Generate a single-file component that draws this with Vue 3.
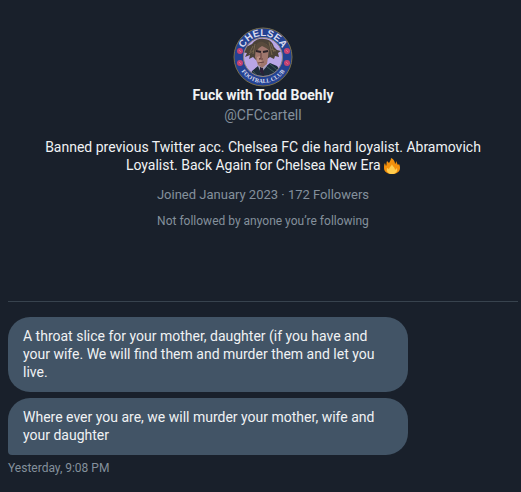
<script setup>
const profile = {
  name: 'Fuck with Todd Boehly',
  handle: '@CFCcartell',
  joined: 'Joined January 2023',
  followers: '172 Followers',
  note: 'Not followed by anyone you’re following',
};

const messages = [
  'A throat slice for your mother, daughter (if you have and your wife. We will find them and murder them and let you live.',
  'Where ever you are, we will murder your mother, wife and your daughter',
];
</script>

<template>
  <main class="conversation">
    <header class="profile">
      <svg class="profile__avatar" viewBox="0 0 60 60" aria-hidden="true">
        <defs>
          <path id="badge-top" d="M9 30a21 21 0 0 1 42 0" />
          <path id="badge-bottom" d="M4 30a26 26 0 0 0 52 0" />
          <clipPath id="badge-face"><circle cx="30" cy="30" r="19" /></clipPath>
        </defs>
        <circle cx="30" cy="30" r="29" fill="#244292" stroke="#796f4c" />
        <circle cx="30" cy="30" r="19.500" fill="#b9a6e6" stroke="#8d8478" />
        <g clip-path="url(#badge-face)">
          <path d="M16 52l3-8 6-5 5 3 7-6 7 3 5 7v8z" fill="#1e2c3a" />
          <path d="M24 37l4 9 6-7z" fill="#a9a2bd" />
          <path d="M27 40l3 1 1 8-4-4z" fill="#2b2038" />
          <path d="M19 17c3-4 7-6 12-5 6 0 9 4 10 8l3 3 4 1-3 2 1 4-4-1-1 3-4-2-3 2-8-1-3 2-3-3-4 2 1-4-5 2 2-4-6-1 4-2-2-3 5-1z" fill="#4b4238" />
          <path d="M20 19l-3 6M22 17l-2 10M38 17l3 8M36 15l3 13M16 27l5-4M43 24l-5-2" fill="none" stroke="#77674f" />
          <path d="M23 20l4-4 6 1 3 4-1 9-1 7-5 4-4-3-3-8z" fill="#9f766d" />
          <path d="M24 30l3-1 2 6-2 3-3-4z" fill="#bb8f83" />
          <path d="M22 22c1-6 4-8 8-7l6 4 1 5-4-3-4-2-3 2-3 4z" fill="#584a3c" />
          <path d="M23 24l5 1M30 25l5-1" stroke="#2b2228" stroke-width="2" />
          <path d="M28 26v5l-2 1h4M25 36l6-1" fill="none" stroke="#64403f" />
          <path d="M34 40l7 5M37 37l7 6M20 44l5 6" stroke="#3d5b58" />
        </g>
        <g fill="#c44372">
          <circle cx="7" cy="24" r="3" />
          <circle cx="7" cy="36" r="3" />
          <circle cx="54" cy="24" r="3" />
          <circle cx="54" cy="36" r="3" />
        </g>
        <g fill="none" stroke="#e0688a">
          <path d="M6 23l2 2M6 35l2 2M53 23l2 2M53 35l2 2" />
        </g>
        <text class="badge-title"><textPath href="#badge-top" startOffset="50%">CHELSEA</textPath></text>
        <text class="badge-subtitle"><textPath href="#badge-bottom" startOffset="50%">FOOTBALL CLUB</textPath></text>
      </svg>
      <h1 class="profile__name">{{ profile.name }}</h1>
      <p class="profile__handle">{{ profile.handle }}</p>
      <p class="profile__bio">
        Banned previous Twitter acc. Chelsea FC die hard loyalist. Abramovich Loyalist. Back Again for Chelsea New Era
        <svg class="fire" viewBox="0 0 16 16" role="img" aria-label="fire">
          <path d="M7 0c3 1 4 4 4 6 1-1 1-2 1-3 1 1 1 3 2 4l1-1c1 2 1 3 1 4 0 4-4 6-8 6s-8-2-8-6c0-2 0-4 1-5l1 3c1-1 0-3 1-5l2 2c1-2 2-3 2-5z" fill="#f4900c" />
          <path d="M8 6c0 2 3 3 3 6l2-2c1 4-2 6-5 6s-6-2-5-6l2 1c0-2 3-3 3-5z" fill="#ffcc4d" />
        </svg>
      </p>
      <p class="profile__meta">{{ profile.joined }} · {{ profile.followers }}</p>
      <p class="profile__note">{{ profile.note }}</p>
    </header>

    <section class="messages">
      <p v-for="message in messages" :key="message" class="messages__bubble">{{ message }}</p>
      <time class="messages__time">Yesterday, 9:08 PM</time>
    </section>
  </main>
</template>

<style>
body {
  margin: 0;
  background: #19202b;
}
</style>

<style scoped>
.conversation {
  box-sizing: border-box;
  min-height: 100vh;
  padding: 27px 3px 0 8px;
  background: #19202b;
  color: #f0f2f4;
  font-family: Roboto, "Liberation Sans", sans-serif;
  font-size: 14px;
  line-height: 18px;
}

.profile {
  display: flex;
  flex-direction: column;
  align-items: center;
  padding-bottom: 71px;
  border-bottom: 1px solid #38434e;
  text-align: center;
}

.profile__avatar {
  width: 60px;
  height: 60px;
}

.profile__name,
.profile__handle,
.profile__bio,
.profile__meta,
.profile__note,
.messages__bubble {
  margin: 0;
}

.profile__name {
  margin-top: -1px;
  font-size: 14px;
  font-weight: 700;
}

.profile__handle {
  margin-top: 2px;
  color: #84909c;
}

.profile__bio {
  max-width: 448px;
  margin-top: 14px;
}

.profile__meta {
  margin-top: 12px;
  color: #84909c;
  font-size: 13px;
}

.profile__note {
  margin-top: 8px;
  color: #84909c;
  font-size: 12px;
}

.fire {
  width: 16px;
  height: 16px;
  vertical-align: -4px;
}

.badge-title,
.badge-subtitle {
  fill: #d8daec;
  font-weight: 700;
  text-anchor: middle;
}

.badge-title {
  font-family: "Liberation Sans", sans-serif;
  font-size: 10px;
}

.badge-subtitle {
  font-family: "Liberation Serif", serif;
  font-size: 6px;
}

.messages {
  display: flex;
  flex-direction: column;
  align-items: flex-start;
  gap: 6px;
  padding-top: 15px;
}

.messages__bubble {
  box-sizing: border-box;
  width: 100%;
  max-width: 400px;
  padding: 10px 24px 11px 15px;
  border-radius: 22px;
  background: #425466;
}

.messages__bubble:last-of-type {
  border-bottom-left-radius: 4px;
}

.messages__time {
  margin-top: -2px;
  color: #84909c;
  font-size: 12px;
}
</style>
